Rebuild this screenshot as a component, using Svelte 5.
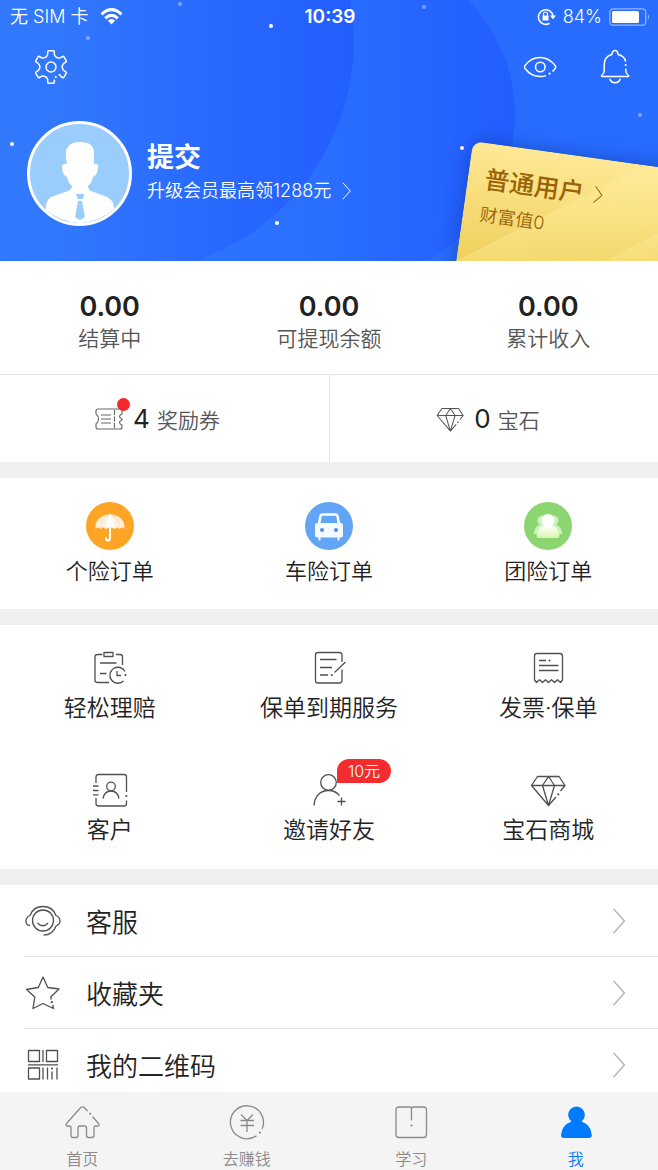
<script lang="ts">
	const stats = [
		{ value: '0.00', label: '结算中' },
		{ value: '0.00', label: '可提现余额' },
		{ value: '0.00', label: '累计收入' }
	];

	const orders = [
		{ icon: 'umbrella', label: '个险订单' },
		{ icon: 'car', label: '车险订单' },
		{ icon: 'group', label: '团险订单' }
	];

	const services = [
		{ icon: 'claim', label: '轻松理赔', badge: '' },
		{ icon: 'renew', label: '保单到期服务', badge: '' },
		{ icon: 'invoice', label: '发票·保单', badge: '' },
		{ icon: 'contacts', label: '客户', badge: '' },
		{ icon: 'invite', label: '邀请好友', badge: '10元' },
		{ icon: 'diamond', label: '宝石商城', badge: '' }
	];

	const menu = [
		{ icon: 'support', label: '客服' },
		{ icon: 'star', label: '收藏夹' },
		{ icon: 'qrcode', label: '我的二维码' }
	];

	const tabs = [
		{ icon: 'home', label: '首页' },
		{ icon: 'coin', label: '去赚钱' },
		{ icon: 'book', label: '学习' },
		{ icon: 'me', label: '我' }
	];

	let activeTab = $state('me');

	const dot = (x: number, y: number) =>
		`<circle cx="${x}" cy="${y}" r="1.1" fill="currentColor" stroke="none"/>`;

	const tooth = 'M-3.3-12.5V-15.3Q-3.3-16.3-2.3-16.3H2.3Q3.3-16.3 3.3-15.3V-12.5';
	const gear = [0, 60, 120, 180, 240, 300]
		.map((a) => `<path transform="translate(18 18) rotate(${a})" d="${tooth}${a === 120 ? '' : 'Q4.8-8.6 9.2-9.1'}"/>`)
		.join('');

	// 線條圖示，全部畫在 36x36 的格子內
	const icons: Record<string, string> = {
		gear: gear + '<circle cx="18" cy="18" r="5"/><path d="M28 26.5Q26.5 25.5 25.5 26"/>' + dot(22.8, 28),
		eye: '<path d="M24 26.6Q21 27.7 18 27.5C11.5 27.5 6 23.5 3 19.5Q2 18 3 16.5C6 12.5 11.5 8.5 18 8.5S30 12.5 33.2 16.5Q34.3 18 33.2 19.5L30.5 22.5"/><circle cx="18.3" cy="18" r="4.8"/>' + dot(27.5, 24.7),
		bell: '<path d="M28.8 19.5V21.5Q28.8 24.5 31 26Q32.3 27.5 31 27.5H5.5Q4 27.5 5 26Q7.2 24.5 7.2 21.5V16C7.2 10.5 10 6.8 14.8 5.5Q15.5 1.5 18 1.5T21.2 5.5C25.5 6.5 28 9.5 28.6 12.5"/><path d="M12.8 29.8Q14 33.8 18 33.8T23.3 29.8"/>' + dot(28.7, 16),
		claim: '<path d="M10.5 4.5H5.5Q3 4.5 3 7V30Q3 32.5 5.5 32.5H17M24 4.5H28Q30.5 4.5 30.5 7V15M12 2.5H21V6.5H12ZM8 13H24.5M8 23.5H14.5M25 21V25.5H29"/><path d="M33 21.5A8 8 0 1 0 31.5 31"/>' + dot(33.5, 25),
		renew: '<path d="M31 12V5Q31 2.5 28.5 2.5H7Q4.5 2.5 4.5 5V30.5Q4.5 33 7 33H28.5Q31 33 31 30.5V19.5M34.5 12L23.5 22.5M9 9.5H25.5M9 17.5H21M9 25H17"/>' + dot(20.8, 25),
		invoice: '<path d="M4.5 30V6Q4.5 3.5 7 3.5H30Q32.5 3.5 32.5 6V30L30.5 32.5L27.5 29.8L24.5 32.5L21.5 29.8L18.5 32.5L15.5 29.8L12.5 32.5L9.5 29.8L6.5 32.5ZM9 10.5H16M9 15.5H28.5M9 20.5H28.5"/>' + dot(19.5, 10.5),
		contacts: '<path d="M4 11V5Q4 2.5 6.5 2.5H32Q34.5 2.5 34.5 5V20M4 26V31.5Q4 34 6.5 34H32Q34.5 34 34.5 31.5V28.5M1 14H6.5M1 18.5H6.5M1 22.8H6.5"/><circle cx="19" cy="14.5" r="4.3"/><path d="M11 26.5C12 21.5 15 19 19 19S26 21.5 27 26.5"/>' + dot(34.3, 24),
		invite: '<circle cx="17.5" cy="10.5" r="7.8"/><path d="M3 33.5C3.5 24 9.5 18.5 17.5 18.5Q24.5 18.5 28.5 23.5M30.5 25.5V33.5M26.5 29.5H34.5"/>',
		diamond: '<path d="M30.5 19L35 13.5L29 4.5H7.5L1.5 13.5L18.5 33.5L26 25M1.5 13.5H35M18.5 4.5L12.5 13.5L18.5 33.5L24.5 13.5Z"/>' + dot(28.3, 22.3),
		support: '<circle cx="18" cy="17.5" r="10.5"/><path d="M5 12.5C7 7 12 3.5 18 3.5S29 7 31 12.5C33.5 13.5 35 15.5 35 18S33.5 22 31 23M5 12.5C2.5 13.5 1 15.5 1 18S2.5 22.5 5 22.5M31 23C29 28.5 25 32 18.5 32.2M12.5 20Q18 25.5 23 20"/>',
		star: '<path d="M26.3 24.5L25.8 22L34 14L22.8 12.5L18 2L13.3 12.5L1.5 14.5L9.8 22L8 33.5L18 28.5L28.5 33.5L27.8 30"/>' + dot(26.8, 27.2),
		qrcode: '<path d="M3.5 3.5H14.5V14.5H3.5ZM21.5 3.5H32.5V14.5H21.5ZM3.5 21H14.5V32H3.5ZM18 3V15M3 17.8H33M18 20.5V32.5M22.5 20.5V32.5M27 24.5V32.5M32 20.5V32.5"/>' + dot(27, 21.5),
		home: '<path d="M23.5 7L20.5 3.8Q18.5 2 16.5 3.8L2.5 19.5Q1 22 3.5 22H5.5Q7 22 7 23.5V31.5Q7 33.5 9 33.5H12Q14 33.5 14 31.5V24Q14 22 16 22H20.5Q22.5 22 22.5 24V31.5Q22.5 33.5 24.5 33.5H28Q30 33.5 30 31.5V23.5Q30 22 31.5 22H33.5Q36 22 34.5 19.5L28.5 12.5"/>' + dot(26.2, 9.8),
		coin: '<path d="M33 25A16.5 16.5 0 1 0 27.5 31.7M12 10.5L18 16.5L24 10.5M18 16.5V28M11.5 16.5H25M11.5 21.5H25"/>' + dot(31, 28.5),
		book: '<path d="M18.5 16.5V5Q18.5 3 16.5 3H6Q3 3 3 6V30.5Q3 33.5 6 33.5H30.5Q33.5 33.5 33.5 30.5V6Q33.5 3 30.5 3H20.5Q18.5 3 18.5 5"/>' + dot(18.5, 21.5),
		me: '<path fill="currentColor" stroke="none" d="M13.5 17.5A8.3 8.3 0 1 1 23.5 17.5Q33 21 33.8 31Q33.8 34 31 34H6Q3 34 3 31Q4 21 13.5 17.5Z"/>'
	};
</script>

{#snippet icon(name: string)}
	<svg class="icon" viewBox="0 0 36 36" aria-hidden="true">{@html icons[name]}</svg>
{/snippet}

{#snippet chevron()}
	<svg class="chevron" viewBox="0 0 12 24" aria-hidden="true"><path d="M1 1L11 12L1 23" /></svg>
{/snippet}

<div class="app">
	<main>
		<header class="hero">
			<svg class="hero-bg" viewBox="0 0 658 261" preserveAspectRatio="none" aria-hidden="true">
				<defs>
					<linearGradient id="sky"><stop offset="0" stop-color="#3379fc" /><stop offset=".5" stop-color="#2a6fff" /><stop offset="1" stop-color="#276bff" /></linearGradient>
					<linearGradient id="orb"><stop offset=".4" stop-color="#2058ff" stop-opacity="0" /><stop offset="1" stop-color="#2058ff" stop-opacity=".7" /></linearGradient>
				</defs>
				<rect width="658" height="261" fill="url(#sky)" />
				<circle cx="351" cy="115" r="164" fill="url(#orb)" />
				<circle cx="121" cy="40" r="233" fill="url(#orb)" />
				<g fill="#fff">
					<circle cx="271" cy="26" r="2" /><circle cx="12" cy="144" r="2" />
					<circle cx="277" cy="223" r="2" /><circle cx="462" cy="148" r="2" />
					<g opacity=".4">
						<circle cx="180" cy="4" r="2" /><circle cx="88" cy="38" r="2" />
						<circle cx="424" cy="7" r="2" /><circle cx="640" cy="115" r="2" />
					</g>
				</g>
			</svg>

			<div class="status">
				<div class="carrier">
					<span>无 SIM 卡</span>
					<svg width="23" height="17" viewBox="0 0 23 17" aria-hidden="true">
						<g fill="none" stroke="#fff" stroke-width="3"><path d="M1.5 6.3Q11.5-3 21.5 6.3" /><path d="M5.2 10.3Q11.5 4.5 17.8 10.3" /></g>
						<path fill="#fff" d="M7.8 12.5Q11.5 9.5 15.2 12.5L11.5 16.5Z" />
					</svg>
				</div>
				<time>10:39</time>
				<div class="power">
					<svg width="19" height="18" viewBox="0 0 19 18" aria-hidden="true">
						<path d="M12.5 15.3A7.3 7.3 0 1 1 16 8" fill="none" stroke="#fff" stroke-width="1.6" />
						<path d="M12.8 7.5H19L16 11.3ZM5.5 7.5H11.5V12.5H5.5Z" fill="#fff" />
						<path d="M6.5 8V6A2 2 0 0 1 10.5 6V8" fill="none" stroke="#fff" stroke-width="1.2" />
					</svg>
					<span>84%</span>
					<svg width="41" height="18" viewBox="0 0 41 18" aria-hidden="true">
						<rect x=".8" y=".8" width="36" height="16.4" rx="3.5" fill="none" stroke="#fff" stroke-opacity=".5" stroke-width="1.3" />
						<rect x="3" y="3" width="27" height="12" rx="1.5" fill="#fff" />
						<path d="M39 6Q41 9 39 12Z" fill="#fff" fill-opacity=".5" />
					</svg>
				</div>
			</div>

			<div class="toolbar">
				<button aria-label="设置">{@render icon('gear')}</button>
				<button class="push" aria-label="显示金额">{@render icon('eye')}</button>
				<button aria-label="消息">{@render icon('bell')}</button>
			</div>

			<div class="profile">
				<svg class="avatar" viewBox="0 0 105 105" aria-hidden="true">
					<circle cx="52.5" cy="52.5" r="50.8" fill="#9accfc" />
					<path fill="#fff" d="M40 43Q37 30 41 26Q44 21 53 21Q67 21 67 32V43Q72 42 71 47Q70 55 66 56Q65 62 61 65Q61 70 67 71L80 76Q87 79 87 88Q72 101 53 102Q34 101 19 89Q18 80 24 76L38 71Q45 69 45 65Q41 62 40 56Q36 55 35 47Q35 42 40 43Z" />
					<path fill="#9accfc" d="M49 73H57L56 78H51ZM51 80H55L58 96L53 99L48 96Z" />
					<circle cx="52.5" cy="52.5" r="51" fill="none" stroke="#fff" stroke-width="3" />
				</svg>
				<div class="who">
					<h1>提交</h1>
					<a class="upgrade" href="#upgrade"><span>升级会员最高领1288元</span>{@render chevron()}</a>
				</div>
			</div>

			<a class="level" href="#level">
				<span class="level-name">普通用户 {@render chevron()}</span>
				<span class="wealth">财富值0</span>
			</a>
		</header>

		<section class="stats">
			{#each stats as item}
				<div class="stat">
					<strong>{item.value}</strong>
					<span>{item.label}</span>
				</div>
			{/each}
		</section>

		<section class="assets">
			<a class="asset" href="#coupons">
				<span class="ticket">
					<svg viewBox="0 0 28 22" width="28" height="22" aria-hidden="true">
						<g fill="none" stroke="#666" stroke-width="1.1">
							<path d="M3 1H25Q27 1 27 3V6Q24.5 7 24.5 8.5T27 11V12Q24.5 13 24.5 14.5T27 17V19Q27 21 25 21H3Q1 21 1 19V16Q3.5 14 3.5 11T1 6V3Q1 1 3 1Z" />
							<path d="M6 7H16M6 11H16M6 15H16" />
							<path d="M19.5 2V20" stroke-dasharray="5 1.5" />
						</g>
					</svg>
					<i class="dot"></i>
				</span>
				<strong>4</strong>
				<span>奖励券</span>
			</a>
			<a class="asset" href="#gems">
				<span class="gem">{@render icon('diamond')}</span>
				<strong>0</strong>
				<span>宝石</span>
			</a>
		</section>

		<section class="grid orders">
			{#each orders as item}
				<a class="cell" href="#{item.icon}">
					<svg class="order-icon" viewBox="0 0 48 48" aria-hidden="true">
						{#if item.icon === 'umbrella'}
							<circle cx="24" cy="24" r="24" fill="#ffa526" />
							<path d="M9.5 27C9 18 15 13 23 12.5Q24 10.5 25 12.5C33 13 39 18 38.5 27Q36 24 33.5 27Q31 24 28.5 27Q24 23 20 27Q17 24 14.5 27Q12 24 9.5 27Z" fill="#fff1dd" />
							<path d="M20 27Q20 16 24 12.5Q28 16 28.5 27Q24 23 20 27Z" fill="#fff" />
							<path d="M24 24V36Q24 38.5 22 38.5T20 36" fill="none" stroke="#fff" stroke-width="2" stroke-linecap="round" />
							<path d="M14.5 27Q15 16 22 13M33.5 27Q33 16 26 13" fill="none" stroke="#ffdcae" />
						{:else if item.icon === 'car'}
							<circle cx="24" cy="24" r="24" fill="#62a4f5" />
							<path d="M14 22L15.5 14Q16 12.5 18 12.5H30Q32 12.5 32.5 14L34 22" fill="none" stroke="#fff" stroke-width="2.5" />
							<path d="M12 21H36Q38 21 38 23V33Q38 35.5 35.5 35.5H34.5V38.5H32.5V35.5H15.5V38.5H13.5V35.5H12.5Q10 35.5 10 33V23Q10 21 12 21Z" fill="#f4faff" />
							<circle cx="17" cy="28" r="2" fill="#4b91ed" /><circle cx="31" cy="28" r="2" fill="#4b91ed" />
						{:else}
							<defs>
								<linearGradient id="crowd" x2="0" y2="1"><stop offset=".5" stop-color="#fff" /><stop offset="1" stop-color="#d5f7a8" /></linearGradient>
							</defs>
							<circle cx="24" cy="24" r="24" fill="#8cd672" />
							<g fill="#cdf2b9">
								<circle cx="18.5" cy="18.5" r="5" /><circle cx="29.5" cy="18.5" r="5" />
								<path d="M9.5 32Q11 23 18 22H30Q37 23 38.5 32Z" />
							</g>
							<path d="M20 23.5A6.5 6.5 0 1 1 28 23.5Q35 26 35.5 34Q35 36 33 36H15Q13 36 12.5 34Q13 26 20 23.5Z" fill="url(#crowd)" />
						{/if}
					</svg>
					<span>{item.label}</span>
				</a>
			{/each}
		</section>

		<section class="grid services">
			{#each services as item}
				<a class="cell" href="#{item.icon}">
					<span class="service-icon">
						{@render icon(item.icon)}
						{#if item.badge}<em class="badge">{item.badge}</em>{/if}
					</span>
					<span>{item.label}</span>
				</a>
			{/each}
		</section>

		<ul class="menu">
			{#each menu as item}
				<li>
					<a href="#{item.icon}">
						{@render icon(item.icon)}
						<span>{item.label}</span>
						{@render chevron()}
					</a>
				</li>
			{/each}
		</ul>
	</main>

	<nav>
		{#each tabs as tab}
			<button class:active={activeTab === tab.icon} onclick={() => (activeTab = tab.icon)}>
				{@render icon(tab.icon)}
				<span>{tab.label}</span>
			</button>
		{/each}
	</nav>
</div>

<style>
	:global(body) {
		background: #fff;
	}

	.app {
		display: flex;
		flex-direction: column;
		height: 100vh;
		font-family: Inter, 'Noto Sans CJK SC', sans-serif;
		font-weight: 350;
		color: #222;
	}

	main {
		flex: 1;
		min-height: 0;
		overflow-y: auto;
		scrollbar-width: none;
	}

	a {
		color: inherit;
		text-decoration: none;
	}

	button {
		padding: 0;
		border: none;
		background: none;
		font: inherit;
		color: inherit;
		cursor: pointer;
	}

	svg {
		display: block;
		flex-shrink: 0;
	}

	.icon {
		width: 36px;
		height: 36px;
		fill: none;
		stroke: currentColor;
		stroke-width: 1.3;
		stroke-linejoin: round;
	}

	.chevron {
		fill: none;
		stroke: currentColor;
		stroke-width: 1.3;
	}

	.hero {
		position: relative;
		overflow: hidden;
		height: 261px;
		color: #fff;
	}

	.hero-bg {
		position: absolute;
		top: 0;
		left: 0;
		width: 100%;
		height: 100%;
	}

	.status {
		position: relative;
		display: grid;
		grid-template-columns: 1fr auto 1fr;
		align-items: center;
		height: 33px;
		padding: 0 8px 0 10px;
		font-size: 18px;
		line-height: 33px;
	}

	.status time {
		font-size: 19px;
		font-weight: 600;
	}

	.carrier,
	.power {
		display: flex;
		align-items: center;
		gap: 12px;
	}

	.power {
		justify-content: flex-end;
		gap: 7px;
	}

	.toolbar {
		position: relative;
		display: flex;
		gap: 39px;
		padding: 16px 25px 0 33px;
	}

	.toolbar .icon {
		stroke-width: 1.5;
	}

	.push {
		margin-left: auto;
	}

	.profile {
		position: relative;
		display: flex;
		gap: 15px;
		padding: 36px 27px 0;
	}

	.avatar {
		width: 105px;
		height: 105px;
	}

	.who {
		padding-top: 21px;
	}

	h1 {
		margin: 0;
		font-size: 27px;
		line-height: 32px;
		font-weight: 700;
	}

	.upgrade {
		display: flex;
		align-items: center;
		gap: 11px;
		font-size: 18px;
		line-height: 34px;
	}

	.upgrade .chevron {
		width: 9px;
		height: 18px;
	}

	.level {
		position: absolute;
		top: 141px;
		right: -40px;
		box-sizing: border-box;
		width: 225px;
		height: 170px;
		padding: 19px 0 0 17px;
		border-radius: 10px;
		background:
			linear-gradient(145deg, transparent 62%, rgba(255, 240, 160, 0.3) 62%, transparent 90%),
			linear-gradient(145deg, transparent 37%, rgba(255, 240, 160, 0.35) 37%, transparent 75%),
			linear-gradient(#ffe896, #eecf58 75%);
		box-shadow: 0 0 20px rgba(0, 20, 90, 0.35);
		color: #9a6206;
		transform: rotate(8deg);
		transform-origin: top left;
	}

	.level-name {
		display: flex;
		align-items: center;
		gap: 10px;
		font-size: 25px;
		line-height: 34px;
		font-weight: 500;
	}

	.level-name .chevron {
		width: 9px;
		height: 18px;
	}

	.wealth {
		display: block;
		font-size: 18px;
		line-height: 38px;
	}

	.stats {
		display: grid;
		grid-template-columns: repeat(3, 1fr);
		padding: 29px 0 21px;
		border-bottom: 1px solid #e4e4e4;
	}

	.stat {
		display: flex;
		flex-direction: column;
		align-items: center;
		color: #555;
		font-size: 21px;
		line-height: 29px;
	}

	.stat strong {
		color: #222;
		font-size: 27px;
		line-height: 34px;
		font-weight: 600;
	}

	.assets {
		display: grid;
		grid-template-columns: 1fr 1fr;
		height: 87px;
		border-bottom: 16px solid #efefef;
	}

	.asset {
		display: flex;
		align-items: center;
		justify-content: center;
		gap: 7px;
		padding-right: 14px;
		color: #555;
		font-size: 21px;
	}

	.asset + .asset {
		padding-right: 12px;
		border-left: 1px solid #e4e4e4;
	}

	.asset strong {
		color: #222;
		font-size: 26px;
		font-weight: 400;
	}

	.ticket {
		position: relative;
		margin-right: 3px;
	}

	.dot {
		position: absolute;
		top: -10px;
		right: -7px;
		width: 13px;
		height: 13px;
		border-radius: 50%;
		background: #f5282d;
	}

	.gem {
		margin-right: 3px;
	}

	.gem .icon {
		width: 28px;
		height: 28px;
	}

	.grid {
		display: grid;
		grid-template-columns: repeat(3, 1fr);
		border-bottom: 16px solid #efefef;
	}

	.cell {
		display: flex;
		flex-direction: column;
		align-items: center;
	}

	.orders {
		padding: 24px 0 16px;
		font-size: 22px;
		line-height: 43px;
	}

	.order-icon {
		width: 48px;
		height: 48px;
	}

	.services {
		row-gap: 42px;
		padding: 25px 0 17px;
		font-size: 23px;
		line-height: 44px;
	}

	.service-icon {
		position: relative;
	}

	.services .icon,
	.menu .icon {
		color: #505050;
	}

	.badge {
		position: absolute;
		top: -13px;
		left: 26px;
		width: 54px;
		border-radius: 12px 12px 12px 1px;
		background: #f22c2f;
		color: #fff;
		font-size: 16px;
		font-style: normal;
		line-height: 24px;
		text-align: center;
	}

	.menu {
		margin: 0;
		padding: 0 0 0 24px;
		list-style: none;
	}

	.menu li + li {
		border-top: 1px solid #e4e4e4;
	}

	.menu a {
		display: flex;
		align-items: center;
		height: 71px;
		padding: 0 32px 0 1px;
		font-size: 26px;
	}

	.menu span {
		flex: 1;
		margin-left: 25px;
	}

	.menu .chevron {
		width: 14px;
		height: 26px;
		color: #b4b4b4;
	}

	nav {
		display: grid;
		grid-template-columns: repeat(4, 1fr);
		height: 78px;
		background: #f4f4f4;
	}

	nav button {
		display: flex;
		flex-direction: column;
		align-items: center;
		gap: 7px;
		padding-top: 12px;
		color: #8a8a8a;
		font-size: 16px;
		line-height: 24px;
	}

	nav .active {
		color: #007aff;
	}
</style>
